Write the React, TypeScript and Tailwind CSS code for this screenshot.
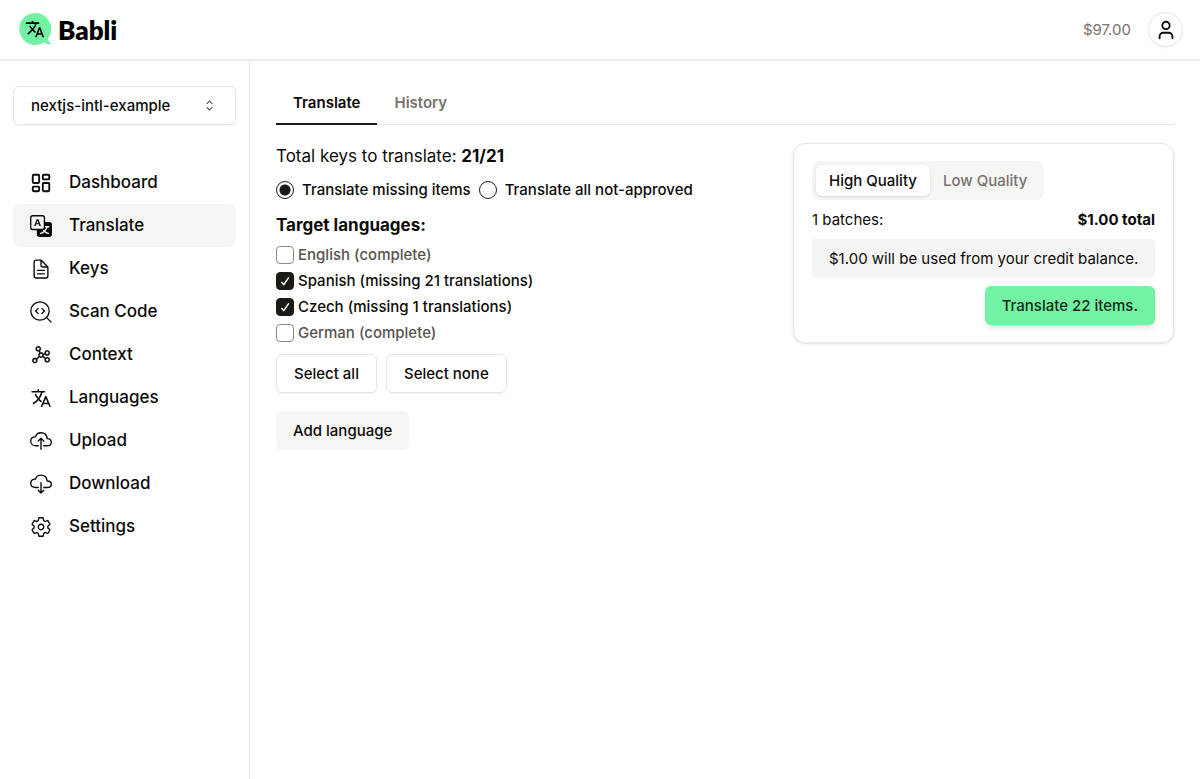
import React, { useState } from 'react';
import { LayoutDashboard, User } from 'lucide-react';
import {
  IoCloudDownloadOutline,
  IoCloudUploadOutline,
  IoDocumentTextOutline,
  IoLanguageOutline,
  IoSettingsOutline,
} from 'react-icons/io5';
import { PiGraph } from 'react-icons/pi';
import { BsTranslate } from 'react-icons/bs';
import { MdTranslate } from 'react-icons/md';
import { RxCaretSort } from 'react-icons/rx';

const ScanCodeIcon = () => (
  <svg width="22" height="22" viewBox="0 0 22 22" fill="none" stroke="currentColor" strokeWidth="1.3" strokeLinecap="round" strokeLinejoin="round">
    <circle cx="10" cy="10" r="9.2" />
    <path d="M16.6 16.6 21 21" />
    <path d="M8.2 7.4 5.6 10l2.6 2.6M11.8 7.4l2.6 2.6-2.6 2.6" />
  </svg>
);

const navItems = [
  { label: 'Dashboard', icon: <LayoutDashboard size={22} /> },
  { label: 'Translate', icon: <BsTranslate size={22} /> },
  { label: 'Keys', icon: <IoDocumentTextOutline size={22} /> },
  { label: 'Scan Code', icon: <ScanCodeIcon /> },
  { label: 'Context', icon: <PiGraph size={22} className="[&_path]:stroke-current [&_path]:stroke-[2px]" /> },
  { label: 'Languages', icon: <IoLanguageOutline size={22} className="[&_path]:stroke-[36px]" /> },
  { label: 'Upload', icon: <IoCloudUploadOutline size={22} /> },
  { label: 'Download', icon: <IoCloudDownloadOutline size={22} /> },
  { label: 'Settings', icon: <IoSettingsOutline size={22} /> },
];

const Logo = () => (
  <a href="#" className="flex items-center gap-1.5 text-black">
    <span className="relative flex">
      <svg width="33" height="33" viewBox="0 0 33 33">
        <path fill="#72f3a3" d="M16 0a16 16 0 1 0 8.8 29.5c2.1 1.6 4.9 2.2 7.9 1.5-2.2-1.4-3.4-3-3.6-5.6A16 16 0 0 0 16 0Z" />
      </svg>
      <MdTranslate size={20} className="absolute top-1.5 left-1.5" />
    </span>
    <span className="font-['Lato',sans-serif] text-[26px] leading-8 font-extrabold">Babli</span>
  </a>
);

const Header = () => (
  <header className="flex h-[61px] items-center justify-between border-b-2 border-[#ececec] pr-[17px] pl-[19px]">
    <Logo />
    <div className="flex items-center gap-[17px]">
      <span className="text-[#78716c]">$97.00</span>
      <button aria-label="Account" className="flex size-[35px] items-center justify-center rounded-full border border-[#e5e5e5] shadow-xs">
        <User size={22} />
      </button>
    </div>
  </header>
);

const Sidebar = () => (
  <aside className="w-[250px] shrink-0 border-r border-[#e5e5e5] px-[13px] pt-[25px]">
    <button className="flex h-[39px] w-full items-center justify-between rounded-md border border-[#e5e5e5] px-[17px] font-medium shadow-xs">
      nextjs-intl-example
      <RxCaretSort size={17} className="text-[#57534e]" />
    </button>
    <nav className="mt-9">
      {navItems.map((item) => (
        <a
          key={item.label}
          href="#"
          className={`flex h-[43px] items-center gap-[17px] rounded-lg px-[17px] text-[17px] font-medium ${
            item.label === 'Translate' ? 'bg-[#f5f5f4]' : ''
          }`}
        >
          {item.icon}
          {item.label}
        </a>
      ))}
    </nav>
  </aside>
);

const modes = ['Translate missing items', 'Translate all not-approved'];

const initialLanguages = [
  { name: 'English', status: 'complete', checked: false },
  { name: 'Spanish', status: 'missing 21 translations', checked: true },
  { name: 'Czech', status: 'missing 1 translations', checked: true },
  { name: 'German', status: 'complete', checked: false },
];

const LanguagePicker = () => {
  const [mode, setMode] = useState(modes[0]);
  const [languages, setLanguages] = useState(initialLanguages);

  const toggle = (name: string) =>
    setLanguages((prev) => prev.map((l) => (l.name === name ? { ...l, checked: !l.checked } : l)));

  const setAll = (checked: boolean) =>
    setLanguages((prev) => prev.map((l) => ({ ...l, checked: checked && l.status !== 'complete' })));

  return (
    <section>
      <p className="text-[17px] leading-[26px]">
        Total keys to translate: <strong className="font-bold">21/21</strong>
      </p>

      <div className="mt-[9px] flex gap-2">
        {modes.map((m) => (
          <label key={m} className="flex items-center gap-2 font-medium">
            <input
              type="radio"
              name="mode"
              checked={mode === m}
              onChange={() => setMode(m)}
              className="size-[18px] appearance-none rounded-full border border-[#1c1917] checked:bg-[radial-gradient(circle,#1c1917_5px,transparent_6px)]"
            />
            {m}
          </label>
        ))}
      </div>

      <h2 className="mt-[11px] text-[17px] leading-[26px] font-bold">Target languages:</h2>

      <ul className="mt-[5px]">
        {languages.map((l) => (
          <li key={l.name} className="h-[26px]">
            <label className={`flex items-center gap-1 font-medium ${l.status === 'complete' ? 'text-[#57534e]' : ''}`}>
              <span className="relative flex">
                <input
                  type="checkbox"
                  checked={l.checked}
                  onChange={() => toggle(l.name)}
                  className="size-[18px] appearance-none rounded border border-[#8c8884] checked:border-[#1c1917] checked:bg-[#1c1917]"
                />
                {l.checked && (
                  <svg className="pointer-events-none absolute inset-0" width="18" height="18" viewBox="0 0 18 18" fill="none" stroke="#fff" strokeWidth="1.4">
                    <path d="m5.4 10 2.4 2.7 5-7.3" />
                  </svg>
                )}
              </span>
              {l.name} ({l.status})
            </label>
          </li>
        ))}
      </ul>

      <div className="mt-[7px] flex gap-[9px]">
        <button onClick={() => setAll(true)} className="h-[39px] rounded-md border border-[#e5e5e5] px-[17px] font-medium shadow-xs">
          Select all
        </button>
        <button onClick={() => setAll(false)} className="h-[39px] rounded-md border border-[#e5e5e5] px-[17px] font-medium shadow-xs">
          Select none
        </button>
      </div>
      <button className="mt-[18px] h-[39px] rounded-md bg-[#f5f5f4] px-[17px] font-medium">Add language</button>
    </section>
  );
};

const qualities = ['High Quality', 'Low Quality'];

const PriceCard = () => {
  const [quality, setQuality] = useState(qualities[0]);

  return (
    <section className="w-[381px] shrink-0 rounded-xl border border-[#e5e5e5] px-[18px] py-[17px] shadow-sm">
      <div className="inline-flex h-[39px] items-center rounded-lg bg-[#f5f5f4] p-1">
        {qualities.map((q) => (
          <button
            key={q}
            onClick={() => setQuality(q)}
            className={`h-[31px] rounded-md px-[13px] font-medium ${quality === q ? 'bg-white shadow-sm' : 'text-[#78716c]'}`}
          >
            {q}
          </button>
        ))}
      </div>
      <div className="mt-2 flex justify-between">
        <span>1 batches:</span>
        <strong className="font-bold">$1.00 total</strong>
      </div>
      <p className="mt-2 rounded bg-[#f4f4f4] py-2 pr-2 pl-[17px]">$1.00 will be used from your credit balance.</p>
      <div className="mt-2 flex justify-end">
        <button className="h-[39px] rounded-md bg-[#72f3a3] px-[17px] font-medium text-[#0c2a17] shadow-md">Translate 22 items.</button>
      </div>
    </section>
  );
};

const App = () => (
  <div className="flex min-h-screen flex-col bg-white font-['Inter',sans-serif] text-[15px] leading-[23px] text-[#0c0a09]">
    <Header />
    <div className="flex grow">
      <Sidebar />
      <main className="grow px-[26px] pt-[19px]">
        <div className="flex border-b border-[#e5e5e5]">
          <button className="-mb-px h-[45px] border-b-2 border-[#1c1917] px-[17px] pt-px font-semibold">Translate</button>
          <button className="-mb-px h-[45px] border-b-2 border-transparent px-[17px] pt-px font-semibold text-[#78716c]">History</button>
        </div>
        <div className="mt-[18px] flex items-start justify-between">
          <LanguagePicker />
          <PriceCard />
        </div>
      </main>
    </div>
  </div>
);

export default App;
